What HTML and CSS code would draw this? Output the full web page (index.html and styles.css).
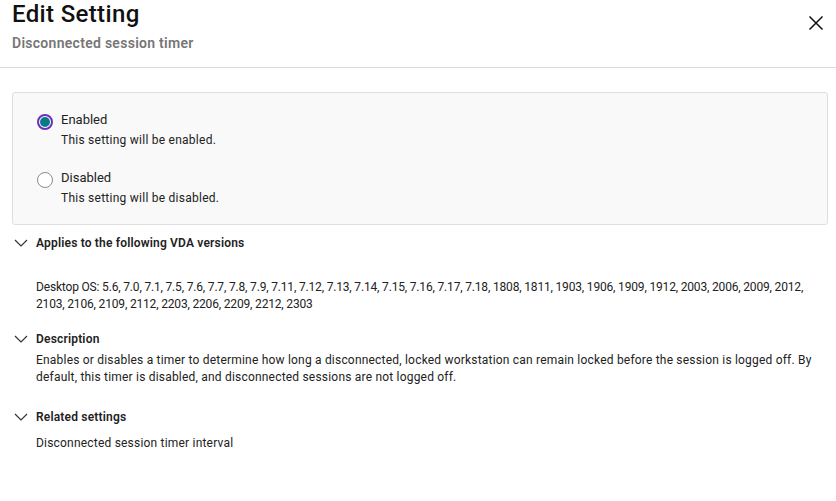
FILE: index.html
```html
<!DOCTYPE html>
<html>
<head>
<meta charset="utf-8">
<link rel="stylesheet" href="styles.css">
</head>
<body>
<div class="dialog">
  <header class="header">
    <div class="titles">
      <h1 class="title">Edit Setting</h1>
      <div class="subtitle">Disconnected session timer</div>
    </div>
    <button class="close" aria-label="Close">
      <svg width="16" height="16" viewBox="0 0 16 16"><path d="M1.5 1.5 L14.5 14.5 M14.5 1.5 L1.5 14.5" stroke="#111" stroke-width="1.5" fill="none"/></svg>
    </button>
  </header>
  <main class="content">
    <div class="options">
      <label class="option">
        <span class="radio checked"><span class="dot"></span></span>
        <span class="opt-text">
          <span class="opt-label">Enabled</span>
          <span class="opt-desc">This setting will be enabled.</span>
        </span>
      </label>
      <label class="option">
        <span class="radio"></span>
        <span class="opt-text">
          <span class="opt-label">Disabled</span>
          <span class="opt-desc">This setting will be disabled.</span>
        </span>
      </label>
    </div>
    <section class="section first">
      <div class="sec-head">
        <svg class="chev" width="14" height="8" viewBox="0 0 14 8"><path d="M1 1 L7 7 L13 1" stroke="#333" stroke-width="1.2" fill="none"/></svg>
        <span>Applies to the following VDA versions</span>
      </div>
      <p class="sec-body versions">Desktop OS: 5.6, 7.0, 7.1, 7.5, 7.6, 7.7, 7.8, 7.9, 7.11, 7.12, 7.13, 7.14, 7.15, 7.16, 7.17, 7.18, 1808, 1811, 1903, 1906, 1909, 1912, 2003, 2006, 2009, 2012, 2103, 2106, 2109, 2112, 2203, 2206, 2209, 2212, 2303</p>
    </section>
    <section class="section second">
      <div class="sec-head">
        <svg class="chev" width="14" height="8" viewBox="0 0 14 8"><path d="M1 1 L7 7 L13 1" stroke="#333" stroke-width="1.2" fill="none"/></svg>
        <span>Description</span>
      </div>
      <p class="sec-body desc">Enables or disables a timer to determine how long a disconnected, locked workstation can remain locked before the session is logged off. By default, this timer is disabled, and disconnected sessions are not logged off.</p>
    </section>
    <section class="section third">
      <div class="sec-head">
        <svg class="chev" width="14" height="8" viewBox="0 0 14 8"><path d="M1 1 L7 7 L13 1" stroke="#333" stroke-width="1.2" fill="none"/></svg>
        <span>Related settings</span>
      </div>
      <p class="sec-body related">Disconnected session timer interval</p>
    </section>
  </main>
</div>
</body>
</html>
```
FILE: styles.css
```css
* { box-sizing: border-box; }
html, body { margin: 0; padding: 0; background: #fff; }
body {
  font-family: Roboto, "Liberation Sans", sans-serif;
  color: #222;
  width: 836px;
  height: 501px;
  overflow: hidden;
}
.header {
  display: flex;
  justify-content: space-between;
  align-items: flex-start;
  padding: 0 12px 0 12px;
  height: 68px;
  border-bottom: 1px solid #dcdcdc;
}
.title {
  margin: 0;
  padding-top: 0;
  font-size: 24px;
  font-weight: 500;
  line-height: 28px;
  letter-spacing: 0.35px;
  color: #111;
}
.subtitle {
  margin-top: 6px;
  font-size: 14px;
  font-weight: 600;
  color: #767676;
  line-height: 18px;
  letter-spacing: 0.28px;
}
.close {
  border: 0;
  background: none;
  padding: 0;
  margin-top: 15px;
  margin-right: 0;
  width: 16px;
  height: 16px;
  cursor: pointer;
}
.close svg { display: block; }
.content { padding: 24px 8px 0 12px; }
.options {
  background: #f9f9f9;
  border: 1px solid #dedede;
  border-radius: 3px;
  padding: 18px 24px 18px 24px;
  display: flex;
  flex-direction: column;
  gap: 21px;
}
.option { display: flex; gap: 8px; align-items: flex-start; }
.radio {
  width: 16px; height: 16px;
  border-radius: 50%;
  border: 1px solid #8a8a8a;
  background: #fff;
  margin-top: 3px;
  display: flex; align-items: center; justify-content: center;
  flex: none;
}
.radio.checked { border: 2px solid #6b2fbf; }
.radio .dot { width: 10px; height: 10px; border-radius: 50%; background: #0a7a88; }
.opt-text { display: flex; flex-direction: column; gap: 4px; }
.opt-label { font-size: 13px; line-height: 17px; color: #222; letter-spacing: 0; }
.opt-desc { font-size: 12px; line-height: 16px; color: #222; letter-spacing: 0.25px; }
.sec-head {
  display: flex;
  align-items: center;
  gap: 8px;
  font-size: 12px;
  font-weight: 600;
  line-height: 16px;
  color: #222;
  margin-left: 2px;
  letter-spacing: 0.18px;
}
.chev { flex: none; }
.sec-body {
  margin: 8px 0 0 24px;
  font-size: 12px;
  line-height: 17px;
  color: #222;
  letter-spacing: 0.2px;
}
.section.first { margin-top: 10px; }
.section.second { margin-top: 18px; }
.section.third { margin-top: 23px; }
.sec-body.versions { margin-top: 28px; letter-spacing: -0.17px; }
.sec-body.desc { margin-top: 5px; }
.sec-body.related { margin-top: 10px; }
```
